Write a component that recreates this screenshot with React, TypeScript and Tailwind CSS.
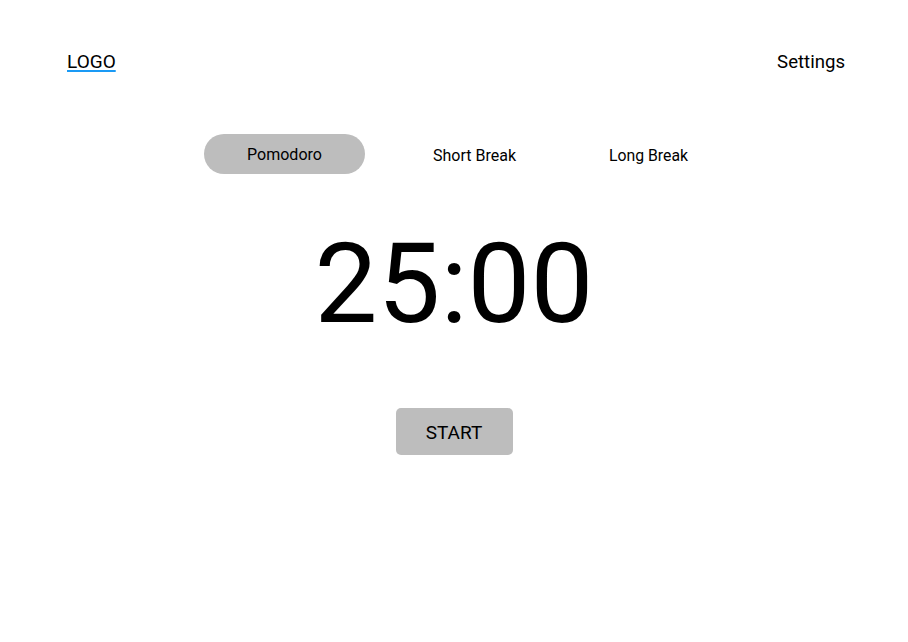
import React from "react";

export default function App() {
  return (
    <div
      className="w-[908px] h-[642px] bg-white text-black"
      style={{ fontFamily: "Roboto, 'Liberation Sans', sans-serif" }}
    >
      <header className="flex items-center justify-between pl-[67px] pr-[63px] pt-[50px]">
        <a className="text-[19px] leading-[24px] underline decoration-[#1a9af5] decoration-2 underline-offset-[2px]">
          LOGO
        </a>
        <span className="text-[18.6px] leading-[24px]">Settings</span>
      </header>

      <nav className="mt-[60px] flex items-center pl-[204px]">
        <button className="w-[161px] h-[40px] rounded-full bg-[#bdbdbd] text-[16px] leading-[20px] pt-[2px]">
          Pomodoro
        </button>
        <button className="ml-[68px] text-[16px] leading-[20px] translate-y-[2px]">Short Break</button>
        <button className="ml-[93px] text-[15.8px] leading-[20px] translate-y-[2px]">Long Break</button>
      </nav>

      <div className="mt-[54px] text-center text-[112px] leading-[112px]">25:00</div>

      <div className="mt-[68px] flex justify-center">
        <button className="w-[117px] h-[47px] rounded-[5px] bg-[#bdbdbd] text-[19px] leading-[24px] pt-[2px]">
          START
        </button>
      </div>
    </div>
  );
}
